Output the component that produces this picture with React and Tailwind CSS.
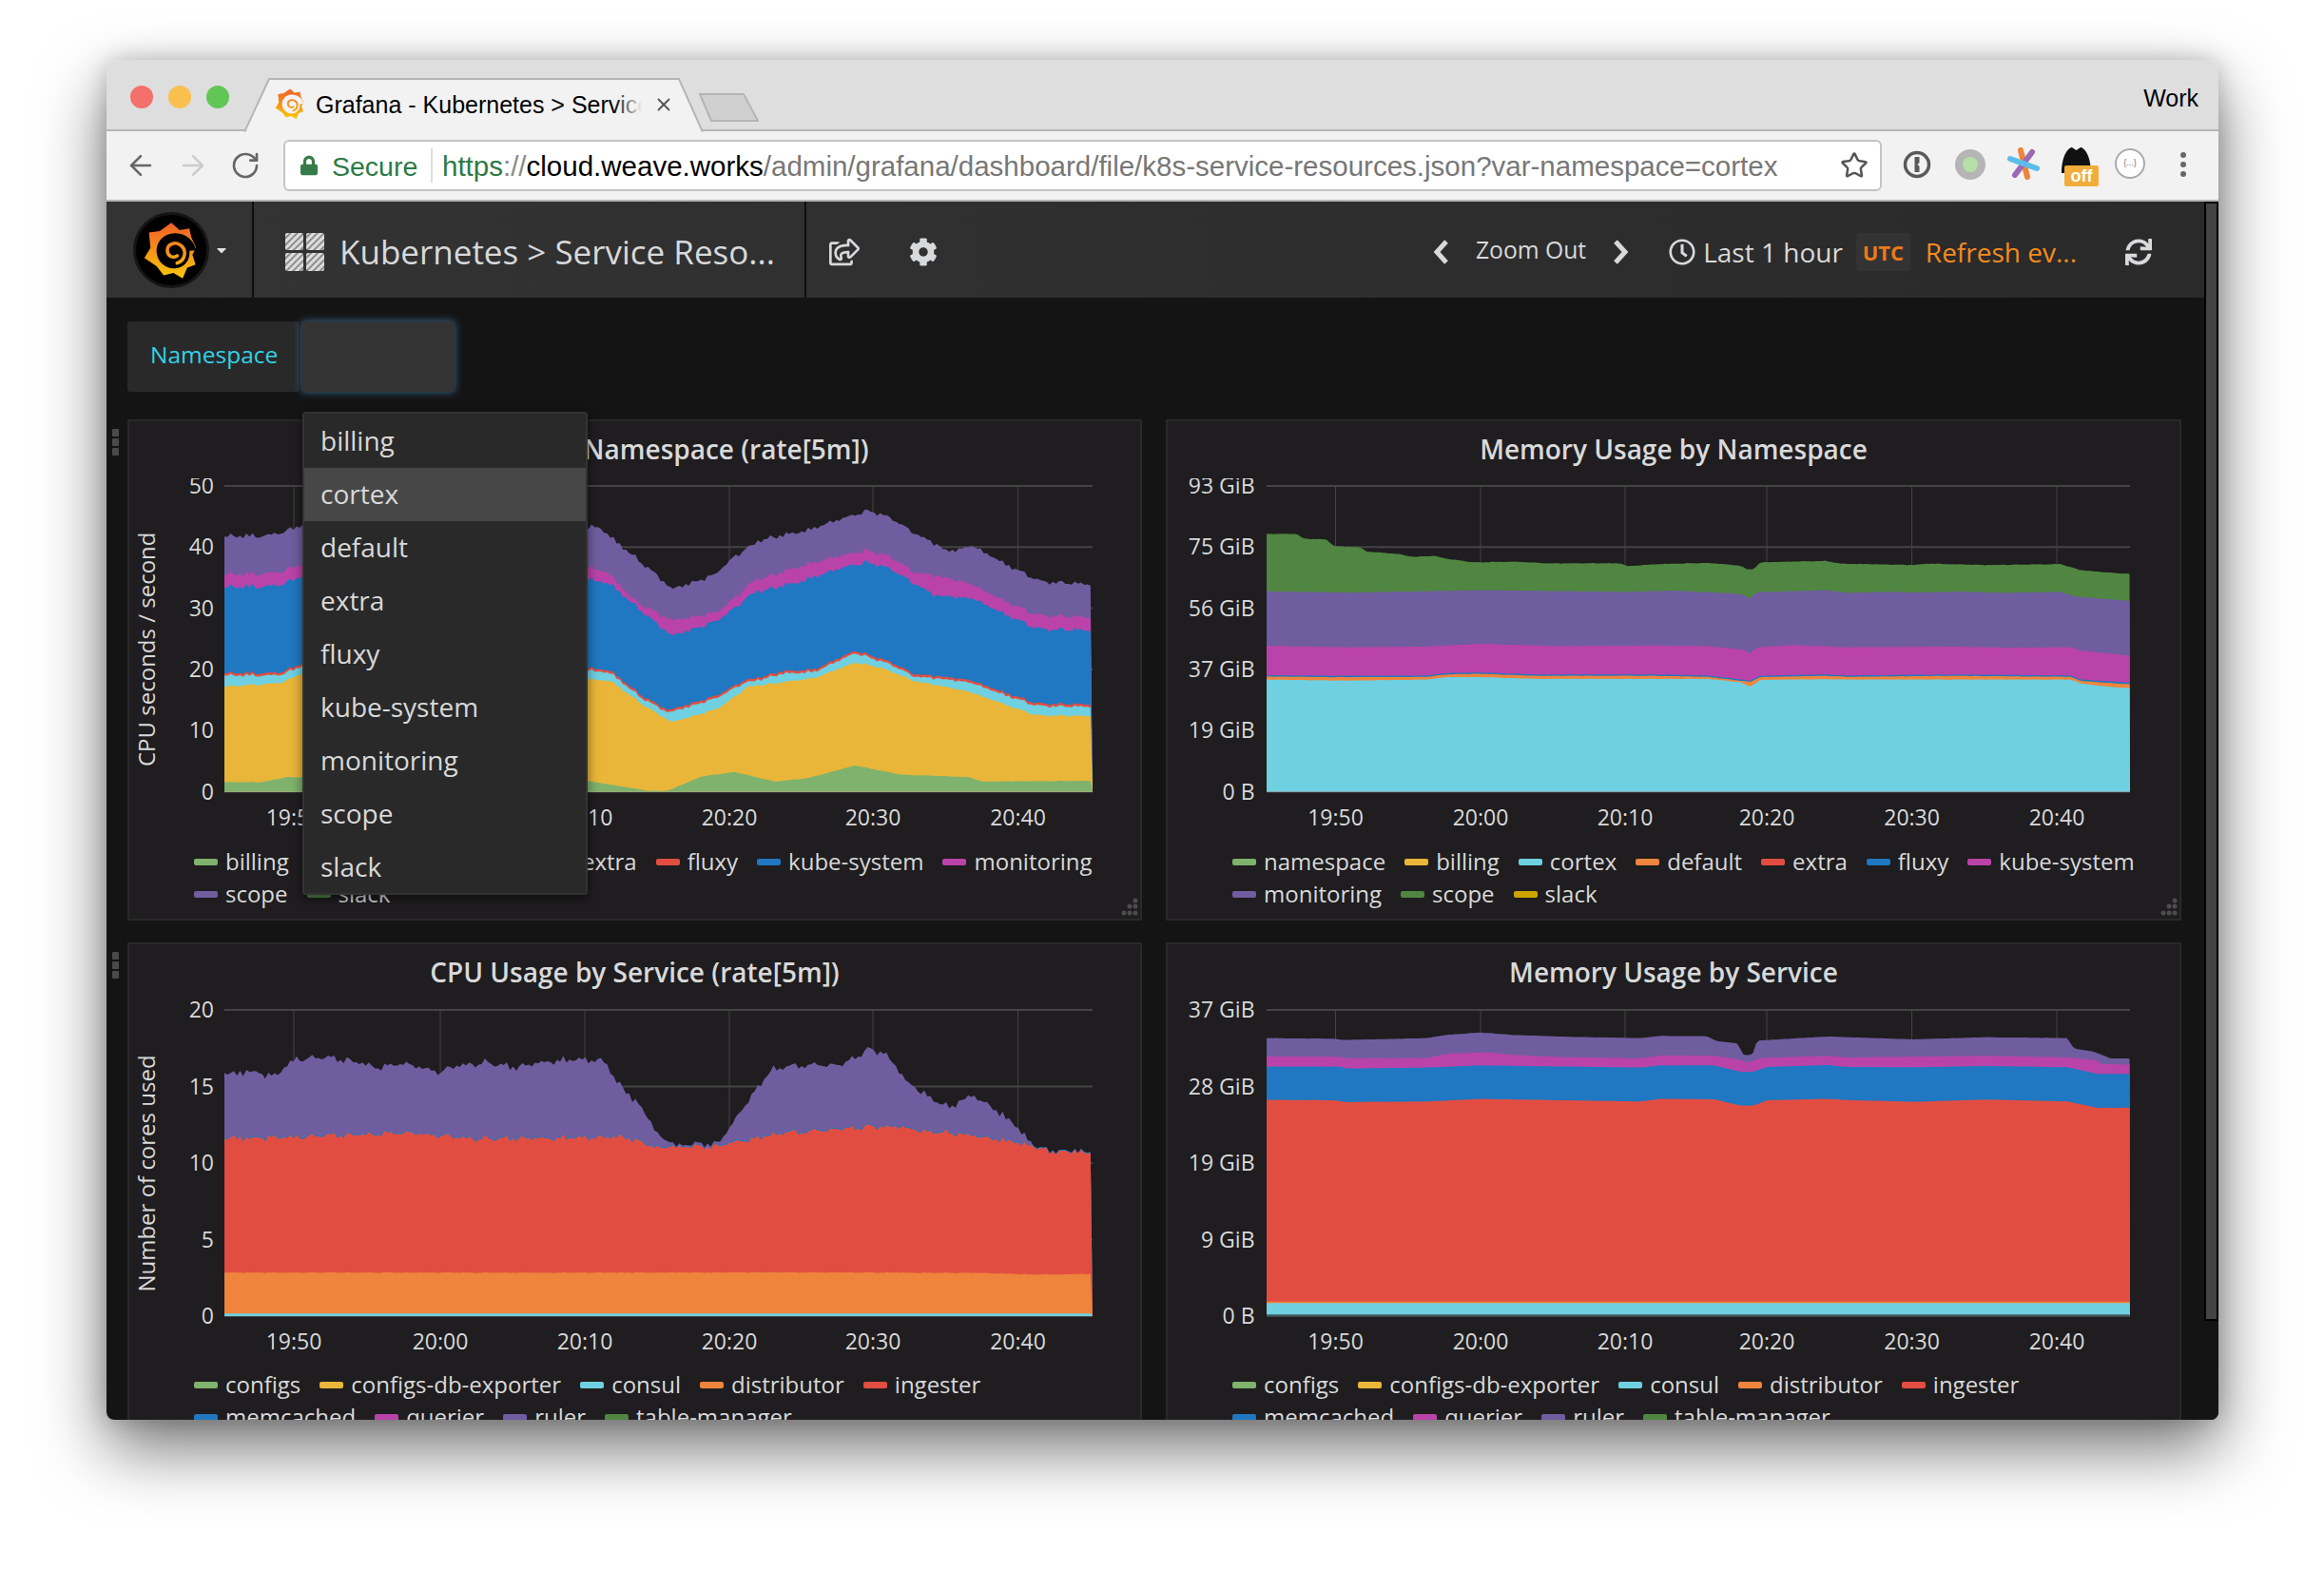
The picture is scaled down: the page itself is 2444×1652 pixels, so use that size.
import React from 'react';
import { ArrowLeft, ArrowRight, RotateCw, Star, X } from 'lucide-react';
import { FaCaretDown, FaCog, FaLock, FaRegClock, FaRegShareSquare, FaSync } from 'react-icons/fa';

const C = {
  purple: '#705da0',
  magenta: '#ba43a9',
  blue: '#1f78c1',
  cyan: '#6ed0e0',
  yellow: '#e9b639',
  green: '#7eb26d',
  red: '#e24d42',
  orange: '#ef843c',
  dgreen: '#508642',
  gold: '#cca300',
};

const jitter = (x, seed) => {
  const h = Math.sin(x * 12.9898 + seed * 78.233) * 43758.5453;
  return (h - Math.floor(h) - 0.5) * 1.1;
};

const wobble = (x, seed) =>
  Math.sin(x * 0.83 + seed) * 0.5 + Math.sin(x * 0.31 + seed * 2) * 0.4 + Math.sin(x * 1.9 + seed * 3) * 0.3 + jitter(x, seed);

const lerp = (pts, x) => {
  if (x <= pts[0][0]) return pts[0][1];
  for (let i = 1; i < pts.length; i++) {
    if (x <= pts[i][0]) {
      const [x0, y0] = pts[i - 1];
      const [x1, y1] = pts[i];
      return y0 + ((y1 - y0) * (x - x0)) / (x1 - x0);
    }
  }
  return pts[pts.length - 1][1];
};

// layer points were read off zoomed crops, zoom = { x: [from, to], y: [from, to] }
const layerPoints = (layer, zoom, plot, seed) => {
  const out = [];
  const sx = (plot.right - plot.left) / (zoom.x[1] - zoom.x[0]);
  const sy = (plot.bottom - plot.top) / (zoom.y[1] - zoom.y[0]);
  for (let px = plot.left; px <= plot.right + 0.01; px += 3.3) {
    const zx = zoom.x[0] + (px - plot.left) / sx;
    let y = plot.top + (lerp(layer.pts, zx) - zoom.y[0]) * sy;
    y += wobble(px, seed) * (layer.noise || 0);
    out.push(`${px.toFixed(1)},${y.toFixed(1)}`);
  }
  return [`${plot.left},${plot.bottom}`, ...out, `${plot.right},${plot.bottom}`].join(' ');
};

const charts = {
  cpuNamespace: {
    title: 'CPU Usage by Namespace (rate[5m])',
    yTitle: 'CPU seconds / second',
    yLabels: ['50', '40', '30', '20', '10', '0'],
    labelX: 91,
    plot: { left: 102, right: 1015, top: 70, bottom: 391.5 },
    ticks: [175, 329, 481, 633, 784, 936.5],
    zoom: { x: [165, 1466], y: [255, 1155] },
    seed: 1.3,
    legend: [
      ['billing', C.green], ['cortex', C.yellow], ['default', C.cyan], ['extra', C.orange], ['fluxy', C.red],
      ['kube-system', C.blue], ['monitoring', C.magenta], ['scope', C.purple], ['slack', C.dgreen],
    ],
    layers: [
      { color: C.purple, noise: 2.5, pts: [[165, 402], [225, 400], [250, 395], [282, 365], [500, 360], [710, 375], [722, 370], [760, 430], [810, 510], [835, 558], [900, 515], [930, 460], [970, 410], [1040, 385], [1100, 345], [1132, 328], [1160, 345], [1200, 395], [1250, 450], [1285, 430], [1340, 490], [1385, 535], [1466, 545]] },
      { color: C.magenta, noise: 2.5, pts: [[165, 515], [250, 510], [282, 480], [710, 490], [740, 510], [780, 590], [835, 650], [905, 625], [960, 530], [1030, 490], [1100, 455], [1130, 445], [1160, 460], [1200, 510], [1280, 540], [1330, 590], [1380, 635], [1466, 642]] },
      { color: C.blue, noise: 2.5, pts: [[165, 552], [250, 548], [282, 515], [710, 525], [745, 545], [790, 620], [835, 695], [905, 650], [960, 565], [1030, 535], [1100, 490], [1130, 480], [1160, 495], [1230, 580], [1285, 585], [1380, 675], [1466, 680]] },
      { color: C.red, noise: 1.5, pts: [[165, 805], [250, 805], [282, 775], [710, 788], [745, 800], [790, 870], [830, 915], [905, 870], [940, 830], [1000, 800], [1050, 795], [1110, 740], [1160, 770], [1200, 810], [1280, 825], [1330, 860], [1380, 895], [1466, 898]] },
      { color: C.cyan, noise: 1.5, pts: [[165, 812], [250, 812], [282, 782], [710, 795], [745, 807], [790, 877], [830, 922], [905, 877], [940, 837], [1000, 807], [1050, 802], [1110, 747], [1160, 777], [1200, 817], [1280, 832], [1330, 867], [1380, 902], [1466, 905]] },
      { color: C.yellow, noise: 1, pts: [[165, 845], [250, 835], [282, 805], [710, 822], [745, 830], [790, 895], [835, 950], [905, 910], [950, 845], [1050, 820], [1110, 775], [1150, 790], [1200, 830], [1280, 860], [1380, 930], [1466, 932]] },
      { color: C.green, noise: 0.3, pts: [[165, 1127], [220, 1127], [260, 1112], [282, 1112], [710, 1123], [745, 1135], [800, 1152], [830, 1152], [880, 1110], [930, 1097], [990, 1125], [1040, 1115], [1110, 1078], [1180, 1105], [1280, 1112], [1300, 1125], [1466, 1123]] },
    ],
  },
  memNamespace: {
    title: 'Memory Usage by Namespace',
    labelX: 93.5,
    yLabels: ['93 GiB', '75 GiB', '56 GiB', '37 GiB', '19 GiB', '0 B'],
    plot: { left: 106, right: 1014, top: 70, bottom: 391.5 },
    ticks: [178.5, 331, 483, 632, 784.6, 937],
    zoom: { x: [160, 1454], y: [227, 1127] },
    seed: 2.1,
    legend: [
      ['namespace', C.green], ['billing', C.yellow], ['cortex', C.cyan], ['default', C.orange], ['extra', C.red],
      ['fluxy', C.blue], ['kube-system', C.magenta], ['monitoring', C.purple], ['scope', C.dgreen], ['slack', C.gold],
    ],
    layers: [
      { color: C.dgreen, noise: 0.3, pts: [[160, 368], [205, 368], [215, 382], [250, 385], [262, 405], [300, 408], [310, 420], [360, 428], [380, 436], [410, 433], [435, 443], [470, 452], [530, 450], [580, 455], [690, 455], [700, 463], [750, 457], [820, 454], [870, 462], [880, 473], [890, 472], [900, 452], [1000, 448], [1020, 456], [1130, 460], [1150, 456], [1250, 460], [1350, 457], [1380, 475], [1420, 482], [1454, 486]] },
      { color: C.purple, noise: 0.2, pts: [[160, 537], [280, 541], [480, 534], [700, 539], [770, 535], [870, 545], [885, 558], [895, 540], [1000, 534], [1030, 542], [1090, 539], [1140, 541], [1200, 538], [1260, 542], [1350, 539], [1370, 552], [1454, 566]] },
      { color: C.magenta, noise: 0.2, pts: [[160, 698], [280, 702], [400, 700], [480, 692], [600, 699], [740, 697], [820, 699], [870, 708], [885, 720], [895, 702], [950, 696], [1030, 702], [1190, 700], [1260, 703], [1365, 702], [1380, 712], [1454, 727]] },
      { color: C.blue, noise: 0.2, pts: [[160, 784], [280, 786], [400, 785], [430, 778], [480, 776], [560, 782], [740, 782], [820, 785], [885, 800], [900, 786], [1000, 782], [1030, 785], [1190, 782], [1365, 785], [1380, 797], [1454, 806]] },
      { color: C.orange, noise: 0.2, pts: [[160, 788], [280, 790], [400, 789], [430, 782], [480, 780], [560, 786], [740, 786], [820, 789], [885, 804], [900, 790], [1000, 786], [1030, 789], [1190, 786], [1365, 789], [1380, 801], [1454, 811]] },
      { color: C.cyan, noise: 0.2, pts: [[160, 797], [280, 800], [400, 797], [430, 790], [490, 790], [560, 795], [740, 795], [820, 795], [870, 805], [885, 818], [900, 798], [1000, 796], [1030, 797], [1190, 797], [1365, 797], [1380, 808], [1420, 818], [1454, 822]] },
    ],
  },
  cpuService: {
    title: 'CPU Usage by Service (rate[5m])',
    yTitle: 'Number of cores used',
    yLabels: ['20', '15', '10', '5', '0'],
    labelX: 91,
    plot: { left: 102, right: 1015, top: 71, bottom: 393 },
    ticks: [175, 329, 481, 633, 784, 936.5],
    zoom: { x: [165, 1466], y: [243, 1210] },
    seed: 0.7,
    legend: [
      ['configs', C.green], ['configs-db-exporter', C.yellow], ['consul', C.cyan], ['distributor', C.orange], ['ingester', C.red],
      ['memcached', C.blue], ['querier', C.magenta], ['ruler', C.purple], ['table-manager', C.dgreen],
    ],
    layers: [
      { color: C.purple, noise: 3.6, pts: [[165, 437], [180, 445], [200, 430], [240, 450], [270, 395], [310, 392], [350, 400], [400, 425], [430, 410], [490, 440], [510, 420], [560, 410], [600, 425], [650, 405], [700, 400], [735, 405], [750, 465], [770, 510], [800, 580], [815, 640], [840, 675], [870, 670], [905, 665], [925, 610], [950, 530], [985, 435], [1030, 420], [1090, 420], [1130, 372], [1155, 380], [1185, 470], [1230, 530], [1250, 555], [1285, 515], [1310, 545], [1350, 610], [1370, 655], [1385, 690], [1466, 692]] },
      { color: C.blue, noise: 3.2, pts: [[165, 642], [300, 637], [440, 627], [540, 647], [760, 642], [820, 677], [900, 672], [1000, 632], [1100, 617], [1150, 609], [1280, 637], [1370, 667], [1400, 687], [1466, 692]] },
      { color: C.red, noise: 3.2, pts: [[165, 645], [300, 640], [440, 630], [540, 650], [760, 645], [820, 680], [900, 675], [1000, 635], [1100, 620], [1150, 612], [1280, 640], [1370, 670], [1400, 690], [1466, 695]] },
      { color: C.orange, noise: 0.4, pts: [[165, 1072], [700, 1073], [1000, 1072], [1300, 1074], [1380, 1079], [1466, 1077]] },
      { color: C.cyan, noise: 0, pts: [[165, 1202], [1466, 1202]] },
    ],
  },
  memService: {
    title: 'Memory Usage by Service',
    labelX: 93.5,
    yLabels: ['37 GiB', '28 GiB', '19 GiB', '9 GiB', '0 B'],
    plot: { left: 106, right: 1014, top: 71, bottom: 393 },
    ticks: [178.5, 331, 483, 632, 784.6, 937],
    zoom: { x: [160, 1454], y: [243, 1210] },
    seed: 3,
    legend: [
      ['configs', C.green], ['configs-db-exporter', C.yellow], ['consul', C.cyan], ['distributor', C.orange], ['ingester', C.red],
      ['memcached', C.blue], ['querier', C.magenta], ['ruler', C.purple], ['table-manager', C.dgreen],
    ],
    layers: [
      { color: C.purple, noise: 0.1, pts: [[160, 332], [260, 334], [275, 338], [400, 332], [430, 322], [480, 314], [530, 322], [620, 328], [720, 332], [750, 325], [820, 326], [835, 342], [865, 348], [875, 385], [888, 385], [895, 340], [1000, 327], [1130, 336], [1240, 329], [1360, 332], [1370, 365], [1400, 375], [1425, 396], [1454, 397]] },
      { color: C.magenta, noise: 0.1, pts: [[160, 390], [270, 391], [280, 396], [400, 395], [430, 381], [490, 377], [530, 385], [600, 392], [720, 396], [750, 387], [830, 388], [870, 400], [880, 410], [900, 395], [1000, 388], [1030, 393], [1240, 388], [1360, 393], [1405, 402], [1410, 414], [1454, 416]] },
      { color: C.blue, noise: 0.1, pts: [[160, 422], [270, 422], [280, 428], [400, 425], [480, 418], [720, 425], [750, 418], [830, 418], [870, 438], [890, 438], [910, 423], [1000, 417], [1030, 423], [1130, 424], [1240, 420], [1360, 424], [1405, 445], [1454, 445]] },
      { color: C.red, noise: 0.1, pts: [[160, 527], [260, 528], [280, 534], [400, 532], [480, 524], [720, 532], [750, 524], [830, 525], [870, 545], [890, 545], [910, 528], [1000, 524], [1040, 528], [1130, 533], [1240, 526], [1360, 532], [1405, 552], [1454, 552]] },
      { color: C.orange, noise: 0, pts: [[160, 1164], [1454, 1164]] },
      { color: C.cyan, noise: 0, pts: [[160, 1169], [1454, 1169]] },
      { color: '#3f5a5c', noise: 0, pts: [[160, 1205], [1454, 1205]] },
    ],
  },
};

const namespaces = ['billing', 'cortex', 'default', 'extra', 'fluxy', 'kube-system', 'monitoring', 'scope', 'slack'];

const GrafanaLogo = ({ id, inner = '#000', className }) => (
  <svg viewBox="55 55 195 205" className={className}>
    <defs>
      <linearGradient id={id} x1="0" y1="60" x2="0" y2="255" gradientUnits="userSpaceOnUse">
        <stop offset="0" stopColor="#f05a28" />
        <stop offset="1" stopColor="#fbca0a" />
      </linearGradient>
    </defs>
    <path
      fill={`url(#${id})`}
      d="M153 68 L180 92 L212 87 L218 115 L234 150 L222 172 L232 205 L205 215 L190 250 L160 232 L128 240 L105 210 L65 183 L85 150 L80 100 L115 95 Z"
    />
    <path fill={inner} d="M234 158 C226 120 192 100 160 103 C125 105 102 133 105 165 C108 197 135 219 165 217 C195 215 216 190 212 160 Z" />
    <path
      fill="none"
      stroke={`url(#${id})`}
      strokeWidth="11"
      strokeLinecap="round"
      d="M172 176 C158 186 140 176 140 158 C140 138 166 128 184 142 C204 158 200 190 172 200"
    />
  </svg>
);

const DashIcon = () => (
  <svg viewBox="0 0 41 40" className="w-[41px] h-[40px]">
    <defs>
      <pattern id="hatch" width="5" height="5" patternUnits="userSpaceOnUse" patternTransform="rotate(45)">
        <rect width="5" height="5" fill="#8d8d8d" />
        <rect width="3" height="5" fill="#dcdcdc" />
      </pattern>
    </defs>
    <rect x="0" y="0" width="19" height="18" rx="2" fill="url(#hatch)" />
    <rect x="22" y="0" width="19" height="18" rx="2" fill="url(#hatch)" />
    <rect x="0" y="21" width="19" height="19" rx="2" fill="url(#hatch)" />
    <rect x="22" y="21" width="19" height="19" rx="2" fill="url(#hatch)" />
  </svg>
);

const Chevron = ({ flip, className }) => (
  <svg viewBox="0 0 18 26" className={className} fill="none" stroke="#d8d9da" strokeWidth="5">
    <polyline points={flip ? '4,2 14,13 4,24' : '14,2 4,13 14,24'} />
  </svg>
);

const Panel = ({ chart, handle, resize }) => (
  <div className="relative h-[527px] box-border border-2 border-[#292929] bg-[#1f1d1f]">
    {handle && (
      <div className="absolute left-[-18px] top-[8px] flex flex-col gap-[2px]">
        <div className="w-[7px] h-[8px] rounded-[1px] bg-[#4a4a4a]" />
        <div className="w-[7px] h-[8px] rounded-[1px] bg-[#4a4a4a]" />
        <div className="w-[7px] h-[8px] rounded-[1px] bg-[#4a4a4a]" />
      </div>
    )}
    <div className="h-[60px] pt-[8px] text-center text-[28px] leading-[42px] font-semibold text-[#d8d9da]">{chart.title}</div>
    <ChartArea chart={chart} />
    <div className="mt-[8px] w-[1030px] pl-[68px] flex flex-wrap gap-x-[20px] text-[24px] leading-[34px] text-[#d8d9da]">
      {chart.legend.map(([name, color]) => (
        <div key={name} className="flex items-center gap-[8px] h-[34px]">
          <i className="block w-[25px] h-[7px] rounded-[2px]" style={{ backgroundColor: color }} />
          <span>{name}</span>
        </div>
      ))}
    </div>
    {resize && (
      <svg viewBox="0 0 22 20" className="absolute right-0 bottom-[2px] w-[22px] h-[20px]" fill="#4d4d4d">
        <circle cx="17" cy="3" r="2.5" />
        <circle cx="11" cy="9" r="2.5" />
        <circle cx="17" cy="9" r="2.5" />
        <circle cx="5" cy="16" r="2.5" />
        <circle cx="11" cy="16" r="2.5" />
        <circle cx="17" cy="16" r="2.5" />
      </svg>
    )}
  </div>
);

const ChartArea = ({ chart }) => {
  const { plot, yLabels, ticks, layers, zoom, seed, labelX, yTitle } = chart;
  const step = (plot.bottom - plot.top) / (yLabels.length - 1);
  const xLabels = ['19:50', '20:00', '20:10', '20:20', '20:30', '20:40'];
  return (
    <svg viewBox="2 62 1062 378" className="block w-[1062px] h-[378px]" fontFamily="'Open Sans', sans-serif">
      {yLabels.map((_, i) => (
        <line key={i} x1={plot.left} x2={plot.right} y1={plot.top + i * step} y2={plot.top + i * step} stroke="#444" strokeWidth="2" />
      ))}
      {ticks.map((t) => (
        <line key={t} x1={t} x2={t} y1={plot.top} y2={plot.bottom} stroke="#444" strokeWidth="1" />
      ))}
      {layers.map((l, i) => (
        <polygon key={i} points={layerPoints(l, zoom, plot, seed)} fill={l.color} />
      ))}
      {yLabels.map((label, i) => (
        <text key={label} x={labelX} y={plot.top + i * step + 8} textAnchor="end" fontSize="23" fill="#d8d9da">
          {label}
        </text>
      ))}
      {ticks.map((t, i) => (
        <text key={t} x={t} y={plot.bottom + 35} textAnchor="middle" fontSize="23" fill="#d8d9da">
          {xLabels[i]}
        </text>
      ))}
      {yTitle && (
        <text
          transform={`translate(29 ${(plot.top + plot.bottom) / 2 + 11}) rotate(-90)`}
          textAnchor="middle"
          fontSize="24"
          fill="#d8d9da"
        >
          {yTitle}
        </text>
      )}
    </svg>
  );
};

const TabBar = () => (
  <div className="relative h-[75px] bg-[#dedede] border-b-2 border-[#b5b5b5] font-['Liberation_Sans',sans-serif]">
    <div className="absolute left-[25px] top-[27px] flex gap-[16px]">
      <div className="w-[24px] h-[24px] rounded-full bg-[#f4706a]" />
      <div className="w-[24px] h-[24px] rounded-full bg-[#f9c04f]" />
      <div className="w-[24px] h-[24px] rounded-full bg-[#62c655]" />
    </div>
    <svg viewBox="0 0 482 57" className="absolute left-[145px] top-[19px] w-[482px] h-[57px]">
      <path d="M0 57 L26 1 L457 1 L482 57" fill="#f2f2f2" stroke="#b5b5b5" strokeWidth="2" />
    </svg>
    <svg viewBox="0 0 65 32" className="absolute left-[622px] top-[34px] w-[65px] h-[32px]">
      <path d="M2 2 L48 2 L63 30 L14 30 Z" fill="#d0d0d0" stroke="#b5b5b5" strokeWidth="2" strokeLinejoin="round" />
    </svg>
    <GrafanaLogo id="grafana-tab" inner="#f2f2f2" className="absolute left-[176px] top-[28px] w-[34px] h-[36px]" />
    <div className="absolute left-[220px] top-[30px] w-[343px] h-[34px] overflow-hidden whitespace-nowrap text-[25px] leading-[34px] text-black">
      Grafana - Kubernetes &gt; Service Resources
      <div className="absolute right-0 top-0 w-[30px] h-full bg-gradient-to-r from-transparent to-[#f2f2f2]" />
    </div>
    <X className="absolute left-[575px] top-[36px] w-[22px] h-[22px] text-[#555]" strokeWidth={2} />
    <div className="absolute right-[21px] top-[24px] text-[25px] leading-[32px] text-black">Work</div>
  </div>
);

const AddressBar = () => (
  <div className="h-[74px] bg-[#f2f2f2] border-b-2 border-[#b5b5b5] flex items-center font-['Liberation_Sans',sans-serif]">
    <div className="w-[186px] pl-[19px] flex items-center gap-[21px] shrink-0">
      <ArrowLeft className="w-[34px] h-[34px] text-[#666]" strokeWidth={1.8} />
      <ArrowRight className="w-[34px] h-[34px] text-[#ccc]" strokeWidth={1.8} />
      <RotateCw className="w-[32px] h-[32px] text-[#666] ml-[1px]" strokeWidth={2} />
    </div>
    <div className="w-[1681px] h-[54px] shrink-0 bg-white border-2 border-[#c4c4c4] rounded-[6px] flex items-center text-[29.5px] whitespace-nowrap">
      <FaLock className="ml-[16px] w-[18px] h-[22px] text-[#367c4a]" />
      <span className="ml-[15px] w-[100px] pt-[2px] text-[#2c7a45] text-[28.5px]">Secure</span>
      <div className="w-[2px] h-[36px] bg-[#ddd] ml-[4px]" />
      <div className="ml-[10px] pt-[2px] flex-1 overflow-hidden">
        <span className="text-[#2c7a45]">https</span>
        <span className="text-[#888]">://</span>
        <span className="text-black">cloud.weave.works</span>
        <span className="text-[#777]">/admin/grafana/dashboard/file/k8s-service-resources.json?var-namespace=cortex</span>
      </div>
      <Star className="w-[30px] h-[30px] mr-[12px] text-[#555] shrink-0" strokeWidth={2} />
    </div>
    <div className="flex-1 flex items-center relative h-full">
      <svg viewBox="0 0 30 30" className="absolute left-[22px] top-[20px] w-[30px] h-[30px]">
        <circle cx="15" cy="15" r="12.5" fill="none" stroke="#5a5a5a" strokeWidth="3.5" />
        <path d="M12.5 7 h5 v6 l-2 2 l2 2 v6 h-5 Z" fill="#5a5a5a" />
      </svg>
      <div className="absolute left-[77px] top-[19px] w-[32px] h-[32px] rounded-full bg-[#b5b5b5] flex items-center justify-center">
        <div className="w-[16px] h-[16px] rounded-full bg-[#b4e0a8]" />
      </div>
      <svg viewBox="0 0 34 34" className="absolute left-[132px] top-[17px] w-[34px] h-[34px]" strokeLinecap="round" strokeWidth="6">
        <line x1="14" y1="3" x2="21" y2="31" stroke="#ef843c" />
        <line x1="26" y1="5" x2="8" y2="29" stroke="#9b6ab5" />
        <line x1="3" y1="12" x2="31" y2="22" stroke="#5cbde8" />
      </svg>
      <svg viewBox="0 0 31 28" className="absolute left-[189px] top-[16px] w-[31px] h-[28px]">
        <path d="M0 28 C0 10 7 1 11 1 L15.5 4 L20 1 C24 1 31 10 31 28 Z" fill="#111" />
      </svg>
      <div className="absolute left-[192px] top-[36px] w-[36px] h-[22px] rounded-[2px] bg-[#f0ad3c] text-white text-[18px] leading-[22px] font-bold text-center">
        off
      </div>
      <div className="absolute left-[245px] top-[18px] w-[32px] h-[32px] rounded-full bg-white border-2 border-[#aaa] flex items-center justify-center text-[9px] text-[#777]">
        {'{...}'}
      </div>
      <div className="absolute left-[314px] top-[22px] flex flex-col gap-[4px]">
        <div className="w-[6px] h-[6px] rounded-full bg-[#666]" />
        <div className="w-[6px] h-[6px] rounded-full bg-[#666]" />
        <div className="w-[6px] h-[6px] rounded-full bg-[#666]" />
      </div>
    </div>
  </div>
);

const Navbar = () => (
  <div className="h-[101px] bg-gradient-to-r from-[#333333] to-[#2a2a2a] flex items-center text-[#d8d9da]">
    <div className="w-[155px] h-full border-r-2 border-[#0e0e0e] flex items-center shrink-0 pl-[28px]">
      <div className="w-[80px] h-[80px] rounded-full bg-black border-[3px] border-[#151515] flex items-center justify-center">
        <GrafanaLogo id="grafana-nav" className="w-[64px] h-[66px]" />
      </div>
      <FaCaretDown className="w-[16px] h-[16px] ml-[5px] text-[#e0e0e0]" />
    </div>
    <div className="w-[581px] h-full border-r-2 border-[#0e0e0e] flex items-center shrink-0 pl-[33px] pt-[4px] whitespace-nowrap">
      <DashIcon />
      <span className="ml-[16px] text-[35px] leading-[48px]">Kubernetes &gt; Service Reso...</span>
    </div>
    <div className="flex-1 h-full flex items-center pt-[4px]">
      <FaRegShareSquare className="ml-[24px] w-[32px] h-[30px] shrink-0" />
      <FaCog className="ml-[52px] w-[30px] h-[30px] shrink-0" />
      <div className="flex-1" />
      <Chevron className="w-[18px] h-[26px] shrink-0" />
      <span className="ml-[27px] text-[24.7px] -mt-[3px]">Zoom Out</span>
      <Chevron flip className="ml-[27px] w-[18px] h-[26px] shrink-0" />
      <FaRegClock className="ml-[42px] w-[28px] h-[28px] shrink-0" />
      <span className="ml-[8px] text-[28px]">Last 1 hour</span>
      <span className="ml-[14px] w-[57px] h-[40px] rounded-[4px] bg-[#333] text-center text-[22px] leading-[40px] font-bold text-[#eb7b18]">UTC</span>
      <span className="ml-[16px] text-[28px] text-[#f58b1e]">Refresh ev...</span>
      <FaSync className="ml-[51px] mr-[55px] w-[28px] h-[30px] shrink-0" />
    </div>
  </div>
);

const App = () => (
  <div className="w-[2444px] h-[1652px] bg-white pt-[63px] pl-[112px] overflow-hidden font-['Open_Sans',sans-serif]">
    <div className="w-[2221px] h-[1430px] rounded-t-[12px] rounded-b-[8px] overflow-hidden shadow-[0_30px_70px_rgba(0,0,0,0.55),0_0_24px_rgba(0,0,0,0.2)] flex flex-col">
      <TabBar />
      <AddressBar />
      <div className="flex-1 flex min-h-0 bg-[#141414]">
        <div className="flex-1 min-w-0">
          <Navbar />
          <div className="pl-[22px] pt-[25px]">
            <div className="relative flex h-[74px] mb-[29px]">
              <div className="w-[180px] rounded-l-[3px] bg-[#292929] pl-[24px] text-[24.5px] leading-[70px] text-[#33d2e6]">Namespace</div>
              <div className="ml-[3px] w-[161px] rounded-[3px] bg-[#333] shadow-[0_0_8px_rgba(82,168,236,0.6)]" />
              <div className="absolute left-[184px] top-[95px] z-10 w-[300px] h-[508px] box-border border-2 border-[#333] rounded-[3px] bg-[#292929] shadow-[0_4px_12px_rgba(0,0,0,0.5)] py-[1px]">
                {namespaces.map((ns) => (
                  <div
                    key={ns}
                    className={`h-[56px] pl-[17px] text-[28px] leading-[54px] text-[#d8d9da] ${ns === 'cortex' ? 'bg-[#474747]' : ''}`}
                  >
                    {ns}
                  </div>
                ))}
              </div>
            </div>
            <div className="grid grid-cols-[1067px_1068px] gap-x-[25px] gap-y-[23px]">
              <Panel chart={charts.cpuNamespace} handle resize />
              <Panel chart={charts.memNamespace} resize />
              <Panel chart={charts.cpuService} handle />
              <Panel chart={charts.memService} />
            </div>
          </div>
        </div>
        <div className="w-[15px] shrink-0 bg-[#141414]">
          <div className="h-[1177px] box-border border-2 border-black bg-[#444]" />
        </div>
      </div>
    </div>
  </div>
);

export default App;
